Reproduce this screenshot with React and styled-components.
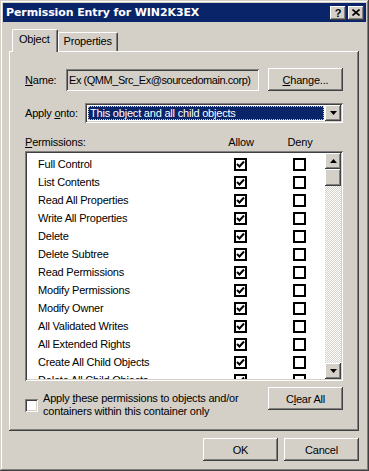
import React from "react";
import styled, { createGlobalStyle } from "styled-components";

const GlobalStyle = createGlobalStyle`
    html, body {
        margin: 0;
        padding: 0;
        background: #d4d0c8;
    }
    body {
        font-family: "Liberation Sans", Arial, sans-serif;
        font-size: 11px;
        letter-spacing: -0.2px;
        color: #000;
    }
`;

const raised = `
    box-shadow: inset -1px -1px #404040, inset 1px 1px #ffffff,
        inset -2px -2px #808080, inset 2px 2px #d4d0c8;
`;

const sunken = `
    box-shadow: inset 1px 1px #808080, inset -1px -1px #ffffff,
        inset 2px 2px #404040, inset -2px -2px #d4d0c8;
`;

const Window = styled.div`
    width: 369px;
    height: 471px;
    box-sizing: border-box;
    padding: 3px;
    background: #d4d0c8;
    display: flex;
    flex-direction: column;
    box-shadow: inset -1px -1px #404040, inset 1px 1px #d4d0c8,
        inset -2px -2px #808080, inset 2px 2px #ffffff;
`;

const TitleBar = styled.div`
    height: 19px;
    background: #0a246a;
    display: flex;
    align-items: center;
    padding: 0 2px 0 3px;
    gap: 2px;
`;

const Title = styled.span`
    flex: 1;
    color: #fff;
    font-weight: bold;
    font-size: 11px;
    font-family: "DejaVu Sans", "Liberation Sans", sans-serif;
    letter-spacing: -0.1px;
`;

const TitleButton = styled.div`
    width: 16px;
    height: 14px;
    background: #d4d0c8;
    ${raised}
    display: flex;
    align-items: center;
    justify-content: center;
    font-weight: bold;
    font-size: 11px;
`;

const Body = styled.div`
    flex: 1;
    display: flex;
    flex-direction: column;
    padding: 6px 7px 0 6px;
`;

const TabStrip = styled.div`
    display: flex;
    align-items: flex-end;
    padding-left: 3px;
    height: 23px;
    position: relative;
    z-index: 1;
`;

const Tab = styled.div`
    height: ${p => (p.$active ? 23 : 19)}px;
    box-sizing: border-box;
    padding: ${p => (p.$active ? "3px 7px 0 6px" : "2px 5px 0 5px")};
    margin-bottom: ${p => (p.$active ? -1 : 0)}px;
    background: #d4d0c8;
    border-top: 1px solid #fff;
    border-left: 1px solid #fff;
    border-right: 1px solid #404040;
    box-shadow: inset -1px 0 #808080;
    border-radius: 2px 2px 0 0;
`;

const Panel = styled.div`
    height: 380px;
    box-sizing: border-box;
    padding: 17px 16px 0 16px;
    display: flex;
    flex-direction: column;
    background: #d4d0c8;
    box-shadow: inset -1px -1px #404040, inset 1px 1px #ffffff,
        inset -2px -2px #808080;
`;

const Row = styled.div`
    display: flex;
    align-items: center;
    height: ${p => p.$h}px;
    margin-bottom: ${p => p.$mb || 0}px;
`;

const Label = styled.span`
    width: ${p => p.$w}px;
    flex: none;
`;

const U = styled.span`
    text-decoration: underline;
`;

const ReadOnlyField = styled.div`
    width: 193px;
    height: 22px;
    box-sizing: border-box;
    padding: 0 3px;
    display: flex;
    align-items: center;
    ${sunken}
    background: #d4d0c8;
    white-space: nowrap;
    overflow: hidden;
    letter-spacing: -0.45px;
`;

const Button = styled.div`
    width: 75px;
    height: 23px;
    box-sizing: border-box;
    margin-left: auto;
    display: flex;
    align-items: center;
    justify-content: center;
    background: #d4d0c8;
    ${raised}
`;

const Combo = styled.div`
    flex: 1;
    height: 20px;
    box-sizing: border-box;
    padding: 2px;
    display: flex;
    background: #fff;
    ${sunken}
`;

const ComboValue = styled.div`
    flex: 1;
    margin: 1px;
    padding: 0 2px;
    display: flex;
    align-items: center;
    background: #0a246a;
    color: #fff;
    outline: 1px dotted #d4d0c8;
    outline-offset: -1px;
`;

const ArrowButton = styled.div`
    width: 16px;
    height: ${p => p.$h || 16}px;
    flex: none;
    background: #d4d0c8;
    display: flex;
    align-items: center;
    justify-content: center;
    ${raised}
`;

const Header = styled.div`
    display: grid;
    grid-template-columns: 1fr 40px 40px;
    column-gap: 19px;
    padding-right: 23px;
    height: 15px;
    align-items: center;
    margin-bottom: 2px;
    & > span:not(:first-child) {
        text-align: center;
    }
`;

const ListBox = styled.div`
    height: 230px;
    box-sizing: border-box;
    padding: 2px;
    display: flex;
    background: #fff;
    ${sunken}
`;

const ListItems = styled.div`
    flex: 1;
    overflow: hidden;
    padding-top: 2px;
`;

const PermRow = styled.div`
    display: grid;
    grid-template-columns: 1fr 13px 13px;
    column-gap: 46px;
    padding: 0 19px 0 11px;
    height: 18px;
    align-items: center;
`;

const FlatBox = styled.div`
    width: 13px;
    height: 13px;
    box-sizing: border-box;
    border: 2px solid #000;
    background: #fff;
    display: flex;
    align-items: center;
    justify-content: center;
`;

const ScrollBar = styled.div`
    width: 16px;
    display: flex;
    flex-direction: column;
    background-color: #fff;
    background-image: conic-gradient(#d4d0c8 25%, #fff 0 50%, #d4d0c8 0 75%, #fff 0);
    background-size: 2px 2px;
`;

const Thumb = styled.div`
    height: 17px;
    background: #d4d0c8;
    ${raised}
`;

const Track = styled.div`
    flex: 1;
`;

const BottomRow = styled.div`
    display: flex;
    align-items: flex-start;
    margin-top: 6px;
`;

const CheckOption = styled.div`
    display: flex;
    align-items: center;
    gap: 5px;
    margin-top: 5px;
    line-height: 13px;
`;

const SunkenBox = styled.div`
    width: 13px;
    height: 13px;
    flex: none;
    background: #fff;
    ${sunken}
`;

const Footer = styled.div`
    display: flex;
    justify-content: flex-end;
    gap: 6px;
    padding-top: 7px;
`;

const FooterButton = styled(Button)`
    margin-left: 0;
`;

const Check = () => (
    <svg width="9" height="9" viewBox="0 0 9 9">
        <path d="M1 4 L3.5 6.5 L8 1.5" fill="none" stroke="#000" strokeWidth="2" />
    </svg>
);

const Triangle = ({ up }) => (
    <svg width="7" height="4" viewBox="0 0 7 4">
        <path d={up ? "M3.5 0 L7 4 L0 4 Z" : "M0 0 L7 0 L3.5 4 Z"} fill="#000" />
    </svg>
);

const CloseGlyph = () => (
    <svg width="8" height="7" viewBox="0 0 8 7">
        <path d="M0.5 0.5 L7.5 6.5 M7.5 0.5 L0.5 6.5" stroke="#000" strokeWidth="1.6" />
    </svg>
);

const permissions = [
    "Full Control",
    "List Contents",
    "Read All Properties",
    "Write All Properties",
    "Delete",
    "Delete Subtree",
    "Read Permissions",
    "Modify Permissions",
    "Modify Owner",
    "All Validated Writes",
    "All Extended Rights",
    "Create All Child Objects",
    "Delete All Child Objects",
];

export default function App() {
    return (
        <>
            <GlobalStyle />
            <Window>
                <TitleBar>
                    <Title>Permission Entry for WIN2K3EX</Title>
                    <TitleButton>?</TitleButton>
                    <TitleButton><CloseGlyph /></TitleButton>
                </TitleBar>
                <Body>
                    <TabStrip>
                        <Tab $active>Object</Tab>
                        <Tab>Properties</Tab>
                    </TabStrip>
                    <Panel>
                        <Row $h={23} $mb={12}>
                            <Label $w={41}><U>N</U>ame:</Label>
                            <ReadOnlyField>Ex (QMM_Src_Ex@sourcedomain.corp)</ReadOnlyField>
                            <Button><U>C</U>hange...</Button>
                        </Row>
                        <Row $h={20} $mb={11}>
                            <Label $w={60}>Apply <U>o</U>nto:</Label>
                            <Combo>
                                <ComboValue>This object and all child objects</ComboValue>
                                <ArrowButton $h={16}><Triangle /></ArrowButton>
                            </Combo>
                        </Row>
                        <Header>
                            <span><U>P</U>ermissions:</span>
                            <span>Allow</span>
                            <span>Deny</span>
                        </Header>
                        <ListBox>
                            <ListItems>
                                {permissions.map(name => (
                                    <PermRow key={name}>
                                        <span>{name}</span>
                                        <FlatBox><Check /></FlatBox>
                                        <FlatBox />
                                    </PermRow>
                                ))}
                            </ListItems>
                            <ScrollBar>
                                <ArrowButton><Triangle up /></ArrowButton>
                                <Thumb />
                                <Track />
                                <ArrowButton><Triangle /></ArrowButton>
                            </ScrollBar>
                        </ListBox>
                        <BottomRow>
                            <CheckOption>
                                <SunkenBox />
                                <span>
                                    Apply <U>t</U>hese permissions to objects and/or<br />
                                    containers within this container only
                                </span>
                            </CheckOption>
                            <Button>C<U>l</U>ear All</Button>
                        </BottomRow>
                    </Panel>
                    <Footer>
                        <FooterButton>OK</FooterButton>
                        <FooterButton>Cancel</FooterButton>
                    </Footer>
                </Body>
            </Window>
        </>
    );
}
